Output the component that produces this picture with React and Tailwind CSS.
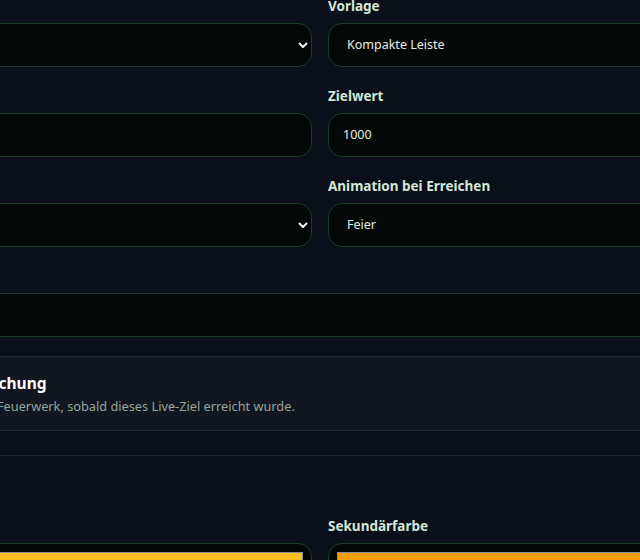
import React from "react";

const font = { fontFamily: '"Noto Sans", "Open Sans", sans-serif' };

function Label({ children }) {
    return <label className="block text-[13.5px] leading-[18px] font-bold text-[#d2e7d6] mb-[8px]">{children}</label>;
}

function SelectBox({ value }) {
    return (
        <div className="h-[44px] rounded-[14px] border border-[#1b3a26] bg-[#040806] flex items-center pl-[18px] pr-[3px]">
            <span className="flex-1 text-[12.5px] text-[#e6ece8]">{value}</span>
            <svg width="10" height="7" viewBox="0 0 10 7">
                <path d="M1.5 1.5 L5 5 L8.5 1.5" stroke="#f3f4f6" strokeWidth="2" fill="none" strokeLinecap="round" strokeLinejoin="round" />
            </svg>
        </div>
    );
}

function InputBox({ value, full }) {
    return (
        <div className={`h-[44px] ${full ? "" : "rounded-[14px]"} border border-[#1b3a26] bg-[#040806] flex items-center pl-[14px]`}>
            <span className="text-[12.5px] text-[#e6ece8]">{value}</span>
        </div>
    );
}

function ColorBox({ color }) {
    return (
        <div className="h-[44px] rounded-[14px] border border-[#1b3a26] bg-[#040806] p-[8px]">
            <div className="h-full w-full border border-[#8b919b]" style={{ background: color }}></div>
        </div>
    );
}

export default function App() {
    return (
        <div className="w-[640px] h-[560px] overflow-hidden bg-[#0a0f1a]" style={font}>
            <div className="w-[856px] -ml-[108px] -mt-[3px]">
                <div className="grid grid-cols-2 gap-x-[16px] gap-y-[20px]">
                    <div>
                        <Label>Typ</Label>
                        <SelectBox value="" />
                    </div>
                    <div>
                        <Label>Vorlage</Label>
                        <SelectBox value="Kompakte Leiste" />
                    </div>
                    <div>
                        <Label>Titel</Label>
                        <InputBox value="" />
                    </div>
                    <div>
                        <Label>Zielwert</Label>
                        <InputBox value="1000" />
                    </div>
                    <div>
                        <Label>Quelle</Label>
                        <SelectBox value="" />
                    </div>
                    <div>
                        <Label>Animation bei Erreichen</Label>
                        <SelectBox value="Feier" />
                    </div>
                    <div className="col-span-2">
                        <Label>Beschreibung</Label>
                        <InputBox value="" full />
                    </div>
                </div>

                <div className="mt-[19px] border-y border-[#232a36] bg-[#111620] h-[75px] flex flex-col justify-center">
                    <div className="-ml-[28px]">
                        <div className="text-[15.5px] leading-[22px] font-bold text-white">Feier bei Zielerreichung</div>
                        <div className="text-[12.75px] leading-[18px] text-[#95a699] mt-[3px]">Zeigt Konfetti und ein Feuerwerk, sobald dieses Live-Ziel erreicht wurde.</div>
                    </div>
                </div>

                <div className="mt-[24px] border-t border-[#1f2530] pt-[61px]">
                    <div className="grid grid-cols-2 gap-x-[16px]">
                        <div>
                            <Label>Primärfarbe</Label>
                            <ColorBox color="#fbbf24" />
                        </div>
                        <div>
                            <Label>Sekundärfarbe</Label>
                            <ColorBox color="#f59e0b" />
                        </div>
                    </div>
                </div>
            </div>
        </div>
    );
}
